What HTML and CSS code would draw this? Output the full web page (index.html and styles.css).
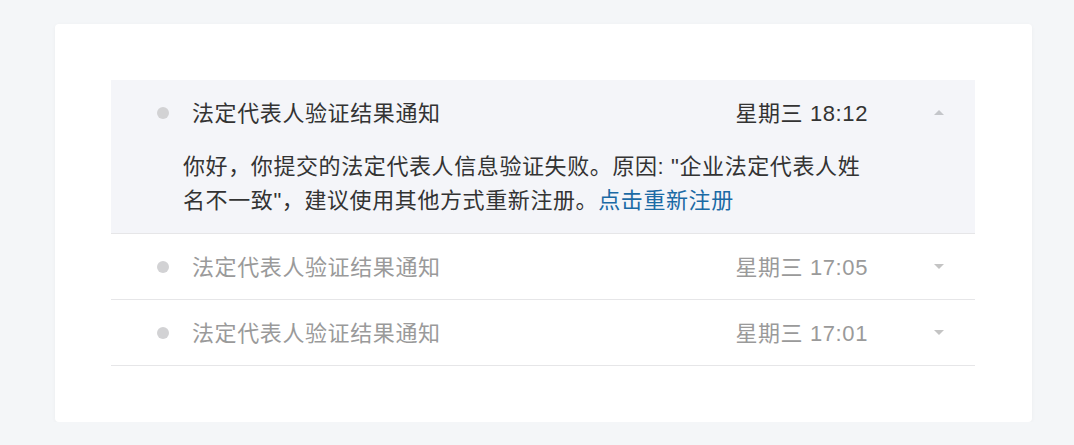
FILE: index.html
```html
<!DOCTYPE html>
<html lang="zh-CN">
<head>
<meta charset="utf-8">
<title>通知</title>
<link rel="stylesheet" href="styles.css">
</head>
<body>
<div class="card">
  <ul class="list">
    <li class="item open">
      <div class="head">
        <span class="dot"></span>
        <span class="title">法定代表人验证结果通知</span>
        <span class="time">星期三 18:12</span>
        <span class="caret-box"><span class="caret up"></span></span>
      </div>
      <p class="body">你好，你提交的法定代表人信息验证失败。原因: "企业法定代表人姓名不一致"，建议使用其他方式重新注册。<a class="link" href="#">点击重新注册</a></p>
    </li>
    <li class="item">
      <div class="head">
        <span class="dot"></span>
        <span class="title">法定代表人验证结果通知</span>
        <span class="time">星期三 17:05</span>
        <span class="caret-box"><span class="caret down"></span></span>
      </div>
    </li>
    <li class="item">
      <div class="head">
        <span class="dot"></span>
        <span class="title">法定代表人验证结果通知</span>
        <span class="time">星期三 17:01</span>
        <span class="caret-box"><span class="caret down"></span></span>
      </div>
    </li>
  </ul>
</div>
</body>
</html>
```
FILE: styles.css
```css
html, body {
  margin: 0;
  padding: 0;
  background: #f4f6f8;
}
body {
  font-family: "Liberation Sans", "Noto Sans CJK SC", sans-serif;
  padding: 24px 0 0 55px;
}
.card {
  width: 977px;
  box-sizing: border-box;
  background: #ffffff;
  border-radius: 4px;
  box-shadow: 0 1px 4px rgba(0, 0, 0, 0.04);
  padding: 56px 57px 56px 56px;
}
.list {
  list-style: none;
  margin: 0;
  padding: 0;
}
.item {
  border-bottom: 1px solid #e6e6e8;
}
.item.open {
  background: #f4f5f9;
  padding-bottom: 15px;
}
.head {
  display: flex;
  align-items: center;
  height: 65px;
  padding: 0 26px 0 46px;
  font-size: 22px;
  letter-spacing: 0.6px;
  color: #9a9a9a;
}
.open .head {
  color: #333333;
}
.dot {
  width: 12px;
  height: 12px;
  border-radius: 50%;
  background: #d2d2d4;
  margin-right: 23px;
  flex: none;
}
.title {
  flex: 1;
  margin-bottom: 4px;
}
.time {
  flex: none;
  margin-bottom: 4px;
}
.caret-box {
  width: 20px;
  margin-left: 61px;
  display: flex;
  justify-content: center;
}
.caret {
  width: 0;
  height: 0;
  border-left: 5px solid transparent;
  border-right: 5px solid transparent;
}
.caret.up {
  border-bottom: 5px solid #c4c6ca;
}
.caret.down {
  border-top: 5px solid #c4c4c4;
}
.body {
  margin: 5px 0 0 72px;
  max-width: 692px;
  font-size: 22px;
  letter-spacing: 0.6px;
  line-height: 34px;
  color: #333333;
}
.link {
  color: #1b6aa5;
  text-decoration: none;
}
```
